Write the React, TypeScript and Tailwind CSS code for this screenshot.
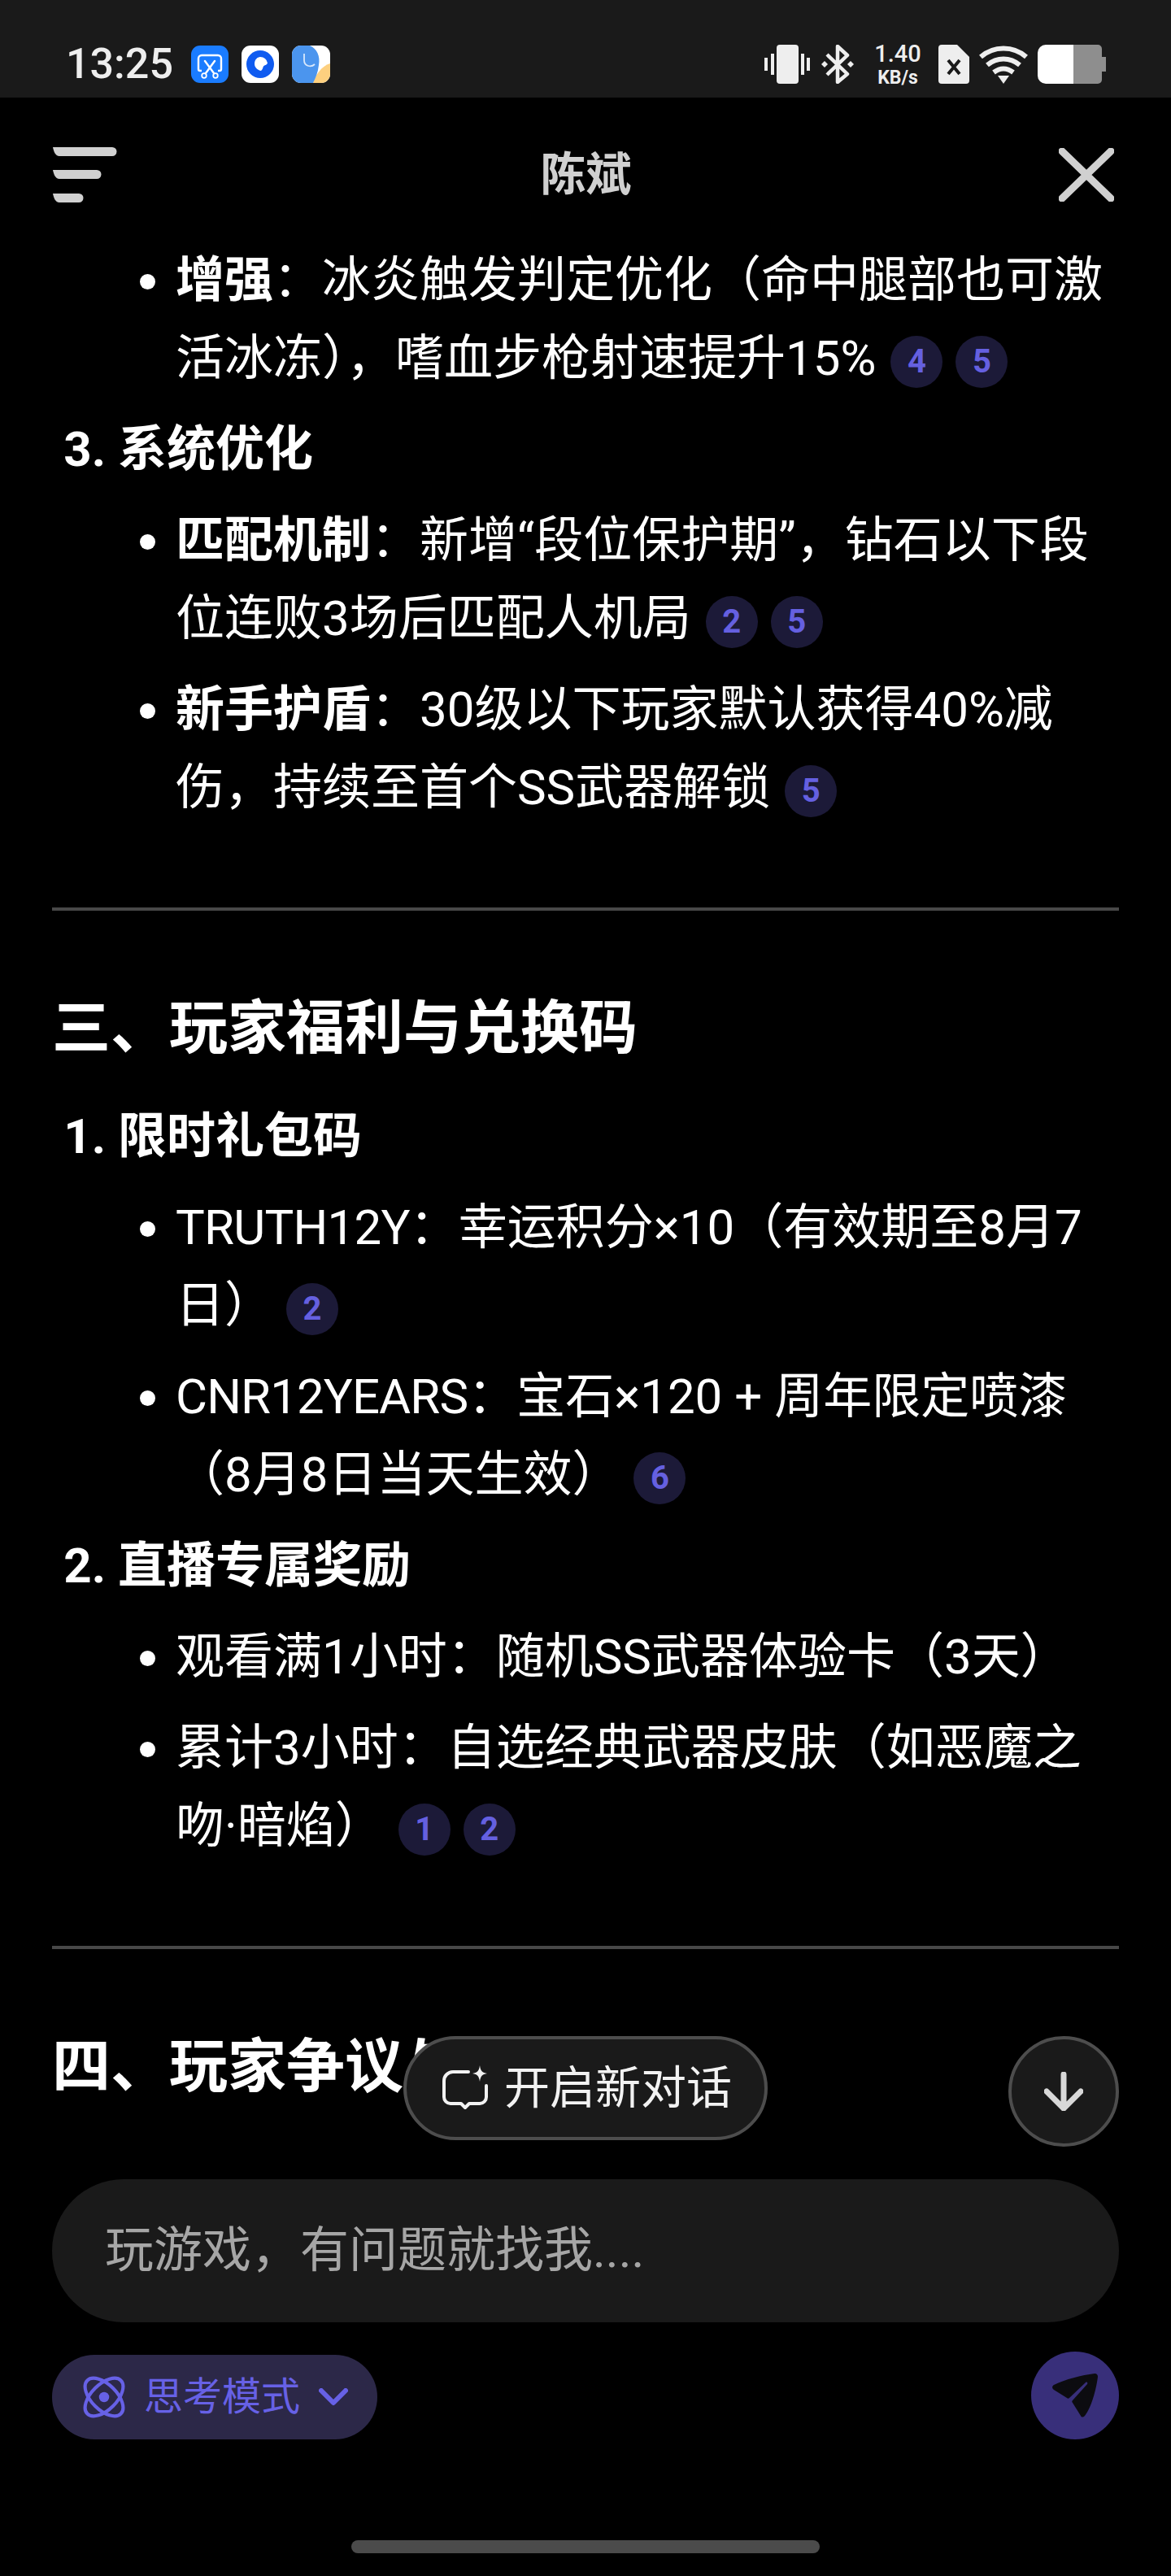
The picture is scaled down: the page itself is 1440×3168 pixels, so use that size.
import React from 'react';

const Cite = ({ n }: { n: number }) => (
  <span className="ml-4 inline-flex h-16 w-16 items-center justify-center rounded-full bg-[#1c1a38] align-[3px] text-[40px] font-bold leading-none text-[#6560e0] first-of-type:ml-[18px]">
    {n}
  </span>
);

const StatusBar = () => (
  <div className="flex h-[120px] shrink-0 items-center justify-between bg-[#1a1a1a] pl-[81px] pr-[80px] pt-[38px] text-[#eeeeee]">
    <div className="flex items-center">
      <span className="mr-[22px] text-[52px] font-medium leading-none">13:25</span>
      <div className="flex gap-4">
        {/* notification icons */}
        <svg width="46" height="46" viewBox="0 0 46 46">
          <rect width="46" height="46" rx="11" fill="#1a7cff" />
          <path d="M9 29V16a4 4 0 0 1 4-4h20a4 4 0 0 1 4 4v13a2 2 0 0 1-2 2h-2M13 31h-2a2 2 0 0 1-2-2" fill="none" stroke="#fff" strokeWidth="2.4" />
          <path d="M17 19l11 15M29 19L18 34" fill="none" stroke="#fff" strokeWidth="2.4" strokeLinecap="round" />
          <circle cx="16" cy="37" r="2.8" fill="none" stroke="#fff" strokeWidth="1.8" />
          <circle cx="30" cy="37" r="2.8" fill="none" stroke="#fff" strokeWidth="1.8" />
        </svg>
        <svg width="46" height="46" viewBox="0 0 46 46">
          <rect width="46" height="46" rx="11" fill="#fff" />
          <circle cx="23" cy="23" r="17" fill="#0f5bf0" />
          <path d="M23 14a9 9 0 0 1 9 7.500c-.5 2-3 2.500-4.500 3.500-1.500 1.200-1 4.500-3.500 6-4-.5-8-4-8-8.500 0-5 3.500-8.500 7-8.500z" fill="#fff" />
        </svg>
        <svg width="47" height="46" viewBox="0 0 47 46">
          <rect width="47" height="46" rx="11" fill="#fff" />
          <path d="M47 22v13a11 11 0 0 1-11 11H26c2-8 10-21 21-24z" fill="#fdd07f" />
          <path d="M11 0h11c9 4 13 13 11 24-1 9-4 16-7 22H11A11 11 0 0 1 0 35V11A11 11 0 0 1 11 0z" fill="#4b95ee" />
          <path d="M15 10v8c0 8 9 9 13 5" fill="none" stroke="#d8e8fb" strokeWidth="1.800" />
        </svg>
      </div>
    </div>
    <div className="flex items-center">
      <svg width="56" height="48" viewBox="0 0 56 48" fill="currentColor">
        <rect x="15" width="27" height="48" rx="4" />
        <rect y="16" width="4" height="16" />
        <rect x="8" y="11" width="4" height="26" />
        <rect x="45" y="11" width="4" height="26" />
        <rect x="52" y="16" width="4" height="16" />
      </svg>
      <svg className="ml-[13px]" width="42" height="48" viewBox="0 0 42 48" fill="none" stroke="currentColor" strokeWidth="4.500" strokeLinejoin="round">
        <path d="M8 12l25 24-12 10V2l12 11L8 37" />
        <path d="M1 24l4-4 4 4-4 4zM33 24l4-4 4 4-4 4z" fill="currentColor" stroke="none" />
      </svg>
      <div className="ml-[25px] flex w-[56px] flex-col items-center font-medium leading-none">
        <span className="text-[29px]">1.40</span>
        <span className="mt-[3px] text-[23px] font-bold">KB/s</span>
      </div>
      <svg className="ml-[22px]" width="38" height="48" viewBox="0 0 38 48">
        <path d="M4 0h19l15 15v29a4 4 0 0 1-4 4H4a4 4 0 0 1-4-4V4a4 4 0 0 1 4-4z" fill="currentColor" />
        <path d="M12 19l14 17M26 19L12 36" stroke="#1a1a1a" strokeWidth="4" fill="none" />
      </svg>
      <svg className="ml-3" width="60" height="48" viewBox="0 0 60 48" fill="none" stroke="currentColor" strokeWidth="6">
        <path d="M2 15C18 1 42 1 58 15" />
        <path d="M10 25c12-10 28-10 40 0" />
        <path d="M18 34c8-6 16-6 24 0" />
        <path d="M23 38h14l-7 10z" fill="currentColor" stroke="none" />
      </svg>
      <svg className="ml-3" width="84" height="48" viewBox="0 0 84 48">
        <path d="M44 0h30a5 5 0 0 1 5 5v10h5v18h-5v10a5 5 0 0 1-5 5H44z" fill="#8e8e8e" />
        <path d="M10 0h34v48H10A10 10 0 0 1 0 38V10A10 10 0 0 1 10 0z" fill="#fff" />
      </svg>
    </div>
  </div>
);

const Header = () => (
  <header className="flex h-[174px] shrink-0 items-center justify-between pl-16 pr-[70px] pt-[16px] text-[#d0d0d0]">
    <svg width="80" height="68" viewBox="0 0 80 68" fill="currentColor" className="ml-px">
      <path d="M0 0h73a5.500 5.500 0 0 1 0 11H8C3 11 1 5 0 0z" />
      <path d="M0 28h54a5.500 5.500 0 0 1 0 11H8C3 39 1 33 0 28z" />
      <path d="M0 57h32a5.500 5.500 0 0 1 0 11H8C3 68 1 62 0 57z" />
    </svg>
    <h1 className="mr-[6px] text-[56px] font-bold leading-none">陈斌</h1>
    <svg width="68" height="66" viewBox="0 0 68 66" fill="none" stroke="currentColor" strokeWidth="9" strokeLinecap="round">
      <path d="M4 4l60 58M64 4L4 62" />
    </svg>
  </header>
);

const App = () => (
  <div lang="zh-CN" className="flex h-[3168px] w-[1440px] flex-col overflow-hidden bg-black font-['Roboto','Noto_Sans_CJK_SC',sans-serif] text-white">
    <StatusBar />
    <Header />

    <main className="relative flex-1 overflow-hidden px-16 text-[60px] leading-[96px]">
      <div className="pt-[3px]">
        <ul className="list-disc space-y-4 pl-[152px]">
          <li>
            <strong>增强</strong>：冰炎触发判定优化（命中腿部也可激活冰冻），嗜血步枪射速提升15%
            <Cite n={4} />
            <Cite n={5} />
          </li>
        </ul>
        <ol start={3} className="mt-4 list-decimal pl-[81px] marker:font-bold">
          <li>
            <strong>系统优化</strong>
            <ul className="mt-4 list-disc space-y-4 pl-[71px]">
              <li>
                <strong>匹配机制</strong>：新增“段位保护期”，钻石以下段位连败3场后匹配人机局
                <Cite n={2} />
                <Cite n={5} />
              </li>
              <li>
                <strong>新手护盾</strong>：30级以下玩家默认获得40%减伤，持续至首个SS武器解锁
                <Cite n={5} />
              </li>
            </ul>
          </li>
        </ol>

        <hr className="mb-[91px] mt-[99px] border-t-[4px] border-[#484848]" />
        <h2 className="text-[72px] font-bold leading-[108px]">三、玩家福利与兑换码</h2>

        <ol className="mt-[31px] list-decimal space-y-4 pl-[81px] marker:font-bold">
          <li>
            <strong>限时礼包码</strong>
            <ul className="mt-4 list-disc space-y-4 pl-[71px]">
              <li>
                <span className="tracking-[-0.75px]">TRUTH12Y</span>：幸运积分×10（有效期至8月7日）
                <Cite n={2} />
              </li>
              <li>
                <span className="tracking-[-0.9px]">CNR12YEARS</span>：宝石×120 + 周年限定喷漆（8月8日当天生效）
                <Cite n={6} />
              </li>
            </ul>
          </li>
          <li>
            <strong>直播专属奖励</strong>
            <ul className="mt-4 list-disc space-y-4 pl-[71px]">
              <li>观看满1小时：随机SS武器体验卡（3天）</li>
              <li>
                累计3小时：自选经典武器皮肤（如恶魔之吻·暗焰）
                <Cite n={1} />
                <Cite n={2} />
              </li>
            </ul>
          </li>
        </ol>

        <hr className="mb-[91px] mt-[99px] border-t-[4px] border-[#484848]" />
        <h2 className="text-[72px] font-bold leading-[108px]">四、玩家争议与</h2>
      </div>

      {/* floating actions over the scrolled text */}
      <button className="absolute bottom-[48px] left-1/2 flex h-[128px] w-[448px] -translate-x-1/2 items-center rounded-full border-[4px] border-[#4d4d4d] bg-[#1a1a1a] pl-[44px] text-[56px] leading-none text-[#f2f2f2]">
        <svg width="56" height="56" viewBox="0 0 56 56" fill="none" stroke="currentColor" strokeWidth="4" strokeLinecap="round" strokeLinejoin="round">
          <path d="M32 8H13a11 11 0 0 0-11 11v20a8 8 0 0 0 8 8h13l5 5 5-5h13a8 8 0 0 0 8-8V25" />
          <path d="M46 0c1 7 3 9 9 10-6 1-8 3-9 10-1-7-3-9-9-10 6-1 8-3 9-10z" fill="currentColor" stroke="none" />
        </svg>
        <span className="ml-5">开启新对话</span>
      </button>
      <button className="absolute bottom-[40px] right-16 flex h-[136px] w-[136px] items-center justify-center rounded-full border-[4px] border-[#4d4d4d] bg-[#1a1a1a] text-[#d8d8d8]">
        <svg width="48" height="48" viewBox="0 0 48 48" fill="none" stroke="currentColor" strokeWidth="7" strokeLinecap="round" strokeLinejoin="round">
          <path d="M24 3v42M3 24l21 21 21-21" />
        </svg>
      </button>
    </main>

    <footer className="shrink-0 px-16 pb-7">
      <div className="flex h-[176px] items-center rounded-full bg-[#1a1a1a] pl-[65px] text-[60px] text-[#a6a6a6]">
        玩游戏，有问题就找我....
      </div>
      <div className="mt-9 flex items-end justify-between">
        <button className="flex h-[104px] w-[400px] items-center rounded-full bg-[#2c2848] pl-[38px] text-[48px] leading-none text-[#6761e6]">
          <svg width="52" height="52" viewBox="0 0 50 50" fill="none" stroke="currentColor" strokeWidth="4">
            <ellipse cx="25" cy="25" rx="28" ry="15" transform="rotate(45 25 25)" />
            <ellipse cx="25" cy="25" rx="28" ry="15" transform="rotate(-45 25 25)" />
            <circle cx="25" cy="25" r="6" fill="currentColor" stroke="none" />
          </svg>
          <span className="ml-[23px]">思考模式</span>
          <svg width="36" height="22" viewBox="0 0 36 22" fill="none" stroke="currentColor" strokeWidth="6" strokeLinecap="round" strokeLinejoin="round" className="ml-[23px]">
            <path d="M3 3l15 15L33 3" />
          </svg>
        </button>
        <button className="flex h-[108px] w-[108px] items-center justify-center rounded-full bg-[#382f7a]">
          <svg width="56" height="54" viewBox="0 0 56 54" fill="#0c0c10">
            <path d="M52 0c3 0 4 2 4 4-2 16-8 38-16 48-2 2-4 2-5 0l-10-16c-1-1-1-2 0-3l18-20c1-2-1-3-2-2L21 30c-1 1-2 1-3 0L2 20c-3-2-2-5 0-6C16 7 36 2 52 0z" />
          </svg>
        </button>
      </div>
      <div className="mx-auto mt-[124px] h-4 w-[576px] rounded-full bg-[#4b4b4b]" />
    </footer>
  </div>
);

export default App;
